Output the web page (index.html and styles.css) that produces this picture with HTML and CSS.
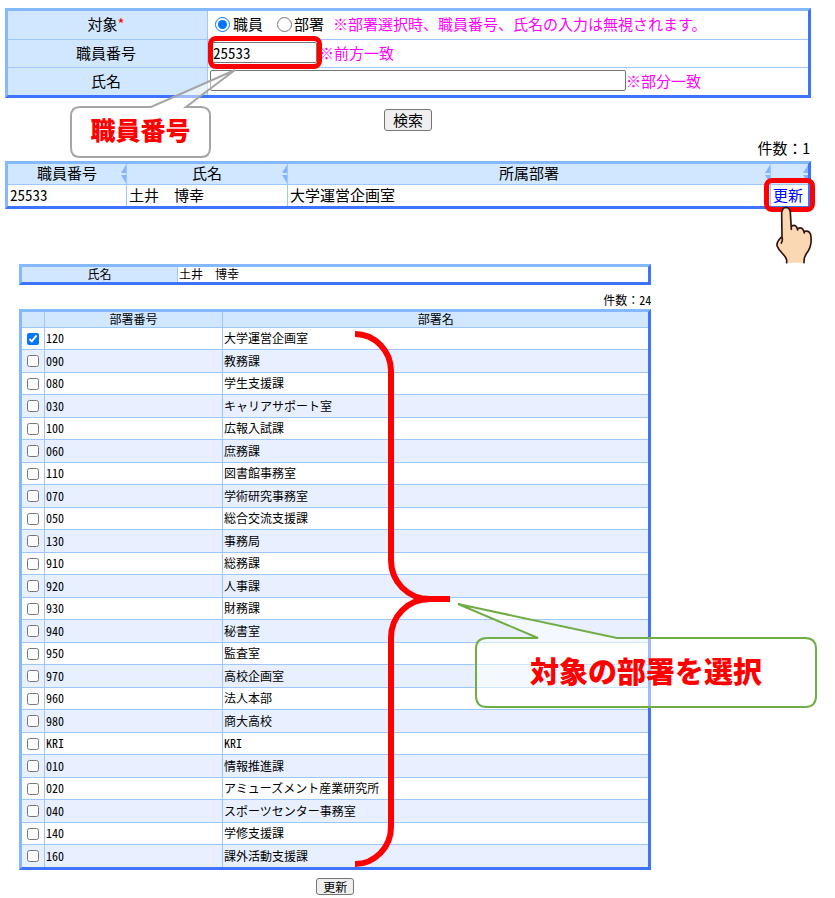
FILE: index.html
```html
<!DOCTYPE html>
<html lang="ja">
<head>
<meta charset="utf-8">
<title>職員検索</title>
<link rel="stylesheet" href="styles.css">
</head>
<body>
<main>
  <section class="search">
    <form>
      <table class="grid form-grid">
        <colgroup><col class="w-label"><col></colgroup>
        <tr>
          <th scope="row">対象<span class="required">*</span></th>
          <td><div class="field">
            <label class="choice"><input type="radio" name="target" checked>職員</label>
            <label class="choice"><input type="radio" name="target">部署</label>
            <span class="note">※部署選択時、職員番号、氏名の入力は無視されます。</span>
          </div></td>
        </tr>
        <tr>
          <th scope="row"><label for="staff-no">職員番号</label></th>
          <td><div class="field">
            <span class="marked marked-input"><input class="text short num" id="staff-no" type="text" value="25533"></span>
            <span class="note">※前方一致</span>
          </div></td>
        </tr>
        <tr>
          <th scope="row"><label for="staff-name">氏名</label></th>
          <td><div class="field">
            <input class="text long" id="staff-name" type="text">
            <span class="note">※部分一致</span>
          </div></td>
        </tr>
      </table>
      <div class="actions"><button type="button">検索</button></div>
    </form>
    <p class="count">件数：<span class="num">1</span></p>
    <table class="grid results">
      <colgroup><col class="w-no"><col class="w-name"><col><col class="w-action"></colgroup>
      <thead>
        <tr>
          <th scope="col">職員番号<svg class="sort" viewBox="0 0 6 18"><path d="M6 0L1 8H6ZM6 18L1 10H6Z"/></svg></th>
          <th scope="col">氏名<svg class="sort" viewBox="0 0 6 18"><path d="M6 0L1 8H6ZM6 18L1 10H6Z"/></svg></th>
          <th scope="col">所属部署<svg class="sort" viewBox="0 0 6 18"><path d="M6 0L1 8H6ZM6 18L1 10H6Z"/></svg></th>
          <th scope="col"><svg class="sort" viewBox="0 0 6 18"><path d="M6 0L1 8H6ZM6 18L1 10H6Z"/></svg></th>
        </tr>
      </thead>
      <tbody>
        <tr><td class="num">25533</td><td>土井　博幸</td><td>大学運営企画室</td><td class="action"><a class="marked marked-link" href="#departments">更新</a>
          <svg class="hand" viewBox="522 220 120 180"><path class="skin" d="M560 396V387C556 372 538 365 531 345C530 335 540 323 546 318L545 247Q547 230 558 230Q570 231 571 245L574 287Q589 278 593 294Q608 285 614 302Q628 298 632 312C635 330 632 350 624 362Q611 377 612 396Z"/><path class="line" d="M560 396V387C556 372 538 365 531 345C530 335 540 323 546 318L545 247Q547 230 558 230Q570 231 571 245L574 296M574 287Q589 278 593 298M593 294Q608 285 613 307M613 302Q628 298 632 312C635 330 632 350 624 362Q611 377 612 396M546 318Q549 329 544 337"/></svg>
        </td></tr>
      </tbody>
    </table>
    <div class="callout callout-no">
      <svg class="bubble" viewBox="0 0 170 92"><path d="M81 38H10Q1 38 1 47V79Q1 88 10 88H131Q140 88 140 79V47Q140 38 131 38H116L165 1Z"/></svg>
      <span>職員番号</span>
    </div>
  </section>

  <section class="departments" id="departments">
    <table class="grid person">
      <colgroup><col class="w-person"><col></colgroup>
      <tr><th scope="row">氏名</th><td>土井　博幸</td></tr>
    </table>
    <p class="count">件数：<span class="num">24</span></p>
    <table class="grid list">
      <colgroup><col class="w-check"><col class="w-code"><col></colgroup>
      <thead><tr><th></th><th scope="col">部署番号</th><th scope="col">部署名</th></tr></thead>
      <tbody>
        <tr><td><input type="checkbox" aria-label="大学運営企画室" checked></td><td>120</td><td>大学運営企画室</td></tr>
        <tr><td><input type="checkbox" aria-label="教務課"></td><td>090</td><td>教務課</td></tr>
        <tr><td><input type="checkbox" aria-label="学生支援課"></td><td>080</td><td>学生支援課</td></tr>
        <tr><td><input type="checkbox" aria-label="キャリアサポート室"></td><td>030</td><td>キャリアサポート室</td></tr>
        <tr><td><input type="checkbox" aria-label="広報入試課"></td><td>100</td><td>広報入試課</td></tr>
        <tr><td><input type="checkbox" aria-label="庶務課"></td><td>060</td><td>庶務課</td></tr>
        <tr><td><input type="checkbox" aria-label="図書館事務室"></td><td>110</td><td>図書館事務室</td></tr>
        <tr><td><input type="checkbox" aria-label="学術研究事務室"></td><td>070</td><td>学術研究事務室</td></tr>
        <tr><td><input type="checkbox" aria-label="総合交流支援課"></td><td>050</td><td>総合交流支援課</td></tr>
        <tr><td><input type="checkbox" aria-label="事務局"></td><td>130</td><td>事務局</td></tr>
        <tr><td><input type="checkbox" aria-label="総務課"></td><td>910</td><td>総務課</td></tr>
        <tr><td><input type="checkbox" aria-label="人事課"></td><td>920</td><td>人事課</td></tr>
        <tr><td><input type="checkbox" aria-label="財務課"></td><td>930</td><td>財務課</td></tr>
        <tr><td><input type="checkbox" aria-label="秘書室"></td><td>940</td><td>秘書室</td></tr>
        <tr><td><input type="checkbox" aria-label="監査室"></td><td>950</td><td>監査室</td></tr>
        <tr><td><input type="checkbox" aria-label="高校企画室"></td><td>970</td><td>高校企画室</td></tr>
        <tr><td><input type="checkbox" aria-label="法人本部"></td><td>960</td><td>法人本部</td></tr>
        <tr><td><input type="checkbox" aria-label="商大高校"></td><td>980</td><td>商大高校</td></tr>
        <tr><td><input type="checkbox" aria-label="KRI"></td><td>KRI</td><td>KRI</td></tr>
        <tr><td><input type="checkbox" aria-label="情報推進課"></td><td>010</td><td>情報推進課</td></tr>
        <tr><td><input type="checkbox" aria-label="アミューズメント産業研究所"></td><td>020</td><td>アミューズメント産業研究所</td></tr>
        <tr><td><input type="checkbox" aria-label="スポーツセンター事務室"></td><td>040</td><td>スポーツセンター事務室</td></tr>
        <tr><td><input type="checkbox" aria-label="学修支援課"></td><td>140</td><td>学修支援課</td></tr>
        <tr><td><input type="checkbox" aria-label="課外活動支援課"></td><td>160</td><td>課外活動支援課</td></tr>
      </tbody>
    </table>
    <div class="actions"><button type="button">更新</button></div>
    <svg class="brace" viewBox="0 0 96 538"><path d="M0 4C20 4 36 21 36 41V230C36 252 53 269 75 269H95M75 269C53 269 36 286 36 308V497C36 517 20 534 0 534"/></svg>
    <div class="callout callout-dept">
      <svg class="bubble" viewBox="0 0 362 108"><path d="M83 36H32Q21 36 21 47V94Q21 105 32 105H350Q361 105 361 94V47Q361 36 350 36H162L3 2Z"/></svg>
      <span>対象の部署を選択</span>
    </div>
  </section>
</main>
</body>
</html>
```
FILE: styles.css
```css
* { box-sizing: border-box; }

body {
  margin: 0;
  background: #fff;
  color: #000;
  font-family: "Noto Sans CJK JP", sans-serif;
  font-size: 15px;
  line-height: 20px;
}

p { margin: 0; }

button {
  padding: 0 8px;
  border: 1px solid #767676;
  border-radius: 3px;
  background: #efefef;
  color: #000;
  font: inherit;
}

.search {
  position: relative;
  padding: 8px 24px 0 5px;
}

.departments {
  position: relative;
  margin: 55px 22% 0 19px;
  font-size: 12px;
  line-height: 15px;
}

/* Tables */
.grid {
  width: 100%;
  table-layout: fixed;
  border-collapse: separate;
  border-spacing: 0;
  border: 3px solid;
  border-color: #84b8ff #3d73ff #3d73ff #84b8ff;
}

.grid th,
.grid td {
  padding: 0 2px 2px;
  font-weight: 400;
  line-height: 18px;
  border: 0 solid #9cc8ff;
}

.grid th { background: #d0e7ff; }
.grid td { text-align: left; }
.grid th + th, .grid th + td, .grid td + td { border-left-width: 1px; }
.grid tr + tr > *, .grid thead + tbody td { border-top-width: 1px; }

.departments th,
.departments td {
  padding: 0 1px 1px;
  line-height: 14px;
}

.w-label { width: 199px; }
.w-person { width: 155px; }
.w-no { width: 118px; }
.w-name { width: 161px; }
.w-action { width: 38px; }
.w-check { width: 22px; }
.w-code { width: 178px; }

/* Half-width figures and Latin letters */
.num, .list td { font-feature-settings: "hwid"; }

/* Search form */
.form-grid tr { height: 28px; }
.form-grid th { padding-right: 5px; }
.required { color: #f00; }
.note { color: #f0f; white-space: nowrap; }

.field {
  display: flex;
  align-items: center;
}

.choice {
  display: flex;
  align-items: center;
  margin-right: 9px;
}

.choice input {
  width: 15px;
  height: 15px;
  margin: 0 3px 0 5px;
}

.choice + .choice input { margin-right: 2px; }

.text {
  height: 21px;
  padding: 0 2px;
  border: 1px solid #767676;
  border-radius: 2px;
  font-family: inherit;
  font-size: inherit;
}

.short { display: block; width: 107px; }
.long { width: 416px; }

.marked { position: relative; }

.marked::after {
  content: "";
  position: absolute;
  border: 5px solid #f00;
  border-radius: 8px;
  pointer-events: none;
}

.marked-input { margin-right: 2px; }
.marked-input::after { inset: -6px -5px -6px -2px; }

.actions {
  display: flex;
  justify-content: center;
}

.search .actions { padding-top: 11px; }
.search .count { margin: 7px 0 3px; padding-right: 1px; }
.count { text-align: right; }

/* Search results */
.results th { position: relative; }
.results td { height: 22px; }

.sort {
  position: absolute;
  top: 1px;
  right: 0;
  width: 6px;
  height: 18px;
  fill: #84b4ff;
}

.results .action { position: relative; }
.action a { color: #00f; text-decoration: none; }
.marked-link::after { inset: -6px -12px -7px -9px; }

.hand {
  position: absolute;
  top: 19px;
  left: 3px;
  width: 40px;
  height: 60px;
}

.skin { fill: #fbd8b4; }

.line {
  fill: none;
  stroke: #301510;
  stroke-width: 5;
  stroke-linecap: round;
  stroke-linejoin: round;
}

/* Department list */
.departments .count { margin: 7px 0 2px; }
.list tbody tr { height: 22px; }
.list tbody tr:nth-child(even) { height: 23px; background: #e8f0ff; }
.list td:first-child { padding-bottom: 0; }
.departments .actions { padding-top: 8px; }
.departments button { padding: 0 6px; }

.list input {
  display: block;
  width: 12px;
  height: 12px;
  margin: 0 auto;
}

/* Annotations laid over the tables */
.brace {
  position: absolute;
  top: 66px;
  left: 336px;
  width: 96px;
  height: 538px;
  fill: none;
  stroke: #f00;
  stroke-width: 6;
}

.callout {
  position: absolute;
  display: flex;
  justify-content: center;
  color: #f00;
  font-weight: 900;
  white-space: nowrap;
}

.callout span { position: relative; }

.bubble {
  position: absolute;
  inset: 0;
  stroke-width: 2;
}

.callout-no {
  top: 69px;
  left: 70px;
  width: 170px;
  height: 92px;
  padding: 46px 29px 0 0;
  font-size: 25px;
  line-height: 28px;
}

.callout-no .bubble { fill: rgb(255 255 255 / 50%); stroke: #a5a5a5; }

.callout-dept {
  top: 338px;
  left: 436px;
  width: 362px;
  height: 108px;
  padding: 51px 0 0 20px;
  font-size: 29px;
  line-height: 34px;
}

.callout-dept .bubble { fill: rgb(255 255 255 / 50%); stroke: #70ad47; }
```
